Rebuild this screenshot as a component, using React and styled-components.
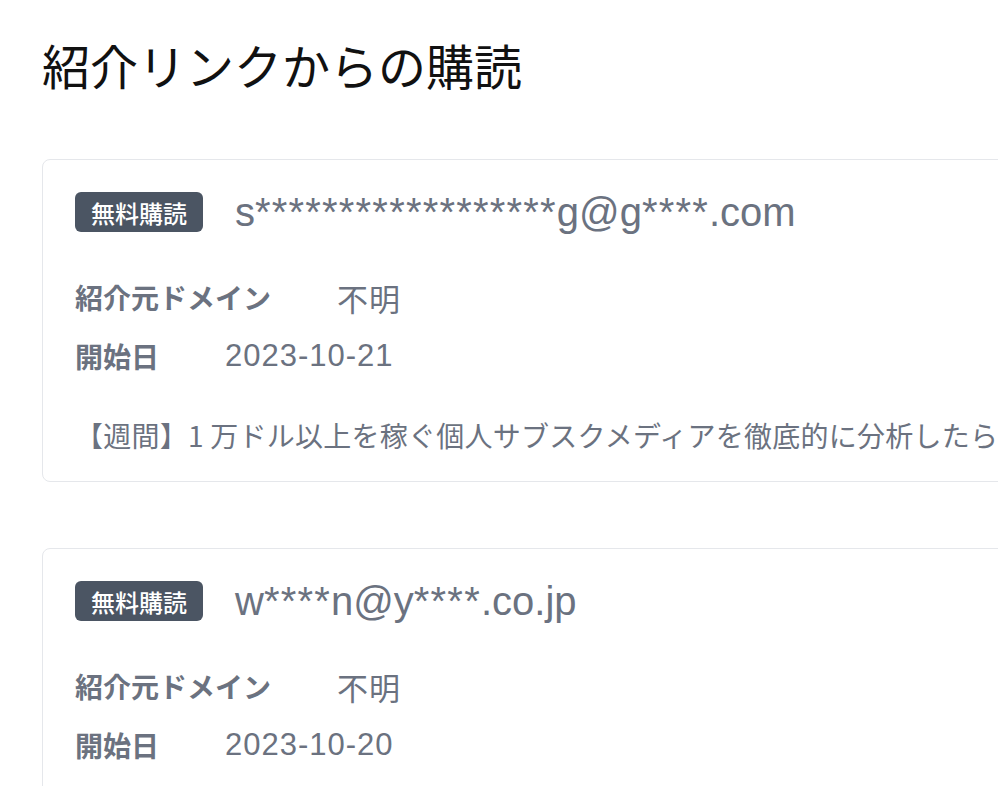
import React from 'react'
import styled, { createGlobalStyle } from 'styled-components'

const GlobalStyle = createGlobalStyle`
  html, body {
    margin: 0;
    padding: 0;
    background: #ffffff;
    overflow: hidden;
  }
  body {
    font-family: "Liberation Sans", "Noto Sans CJK JP", sans-serif;
  }
`;

const Page = styled.div`
  padding: 28px 0 0 42px;
  width: 1200px;
`;

const Title = styled.h1`
  margin: 0 0 59px;
  font-family: "Noto Sans CJK JP", sans-serif;
  font-size: 48px;
  font-weight: 400;
  line-height: 72px;
  color: #111111;
`;

const List = styled.div`
  display: flex;
  flex-direction: column;
  gap: 66px;
`;

const Card = styled.div`
  width: 1100px;
  border: 1px solid #e5e7eb;
  border-radius: 8px;
  padding: 32px 32px 26px;
  box-sizing: border-box;
`;

const Header = styled.div`
  display: flex;
  align-items: center;
  gap: 32px;
  height: 40px;
`;

const Badge = styled.span`
  display: inline-flex;
  align-items: center;
  height: 40px;
  padding: 0 16px;
  border-radius: 6px;
  background: #4b5563;
  color: #ffffff;
  font-family: "Noto Sans CJK JP", sans-serif;
  font-size: 24px;
  font-weight: 500;
`;

const Email = styled.span`
  font-size: 40px;
  color: #6b7280;
  line-height: 40px;
`;

const Mask = styled.span`
  letter-spacing: 1.2px;
`;

const Meta = styled.div`
  display: flex;
  flex-direction: column;
  gap: 19px;
  margin-top: 45px;
`;

const Row = styled.div`
  display: flex;
  align-items: center;
  gap: 66px;
  height: 40px;
`;

const Label = styled.span`
  font-family: "Noto Sans CJK JP", sans-serif;
  font-size: 28px;
  font-weight: 700;
  color: #6b7280;
`;

const Value = styled.span`
  font-size: 31px;
  letter-spacing: 1px;
  color: #6b7280;
`;

const Post = styled.div`
  margin-top: 39px;
  line-height: 40px;
  font-family: "Noto Sans CJK JP", sans-serif;
  font-size: 28px;
  letter-spacing: 0.25px;
  color: #6b7280;
  white-space: nowrap;
`;

// split the masked address so the asterisk runs can be spaced like the original
const MaskedEmail = ({ value }) => (
  <Email>
    {value.split(/(\*+)/).map((part, i) =>
      part.startsWith('*') ? <Mask key={i}>{part}</Mask> : part
    )}
  </Email>
);

const subs = [
  {
    email: 's******************g@g****.com',
    domain: '不明',
    date: '2023-10-21',
    post: '【週間】1 万ドル以上を稼ぐ個人サブスクメディアを徹底的に分析したら見えてきたこと',
  },
  {
    email: 'w****n@y****.co.jp',
    domain: '不明',
    date: '2023-10-20',
    post: '【週間】1 万ドル以上を稼ぐ個人サブスクメディアを徹底的に分析したら見えてきたこと',
  },
];

const App = () => (
  <>
    <GlobalStyle />
    <Page>
      <Title>紹介リンクからの購読</Title>
      <List>
        {subs.map((s, i) => (
          <Card key={i}>
            <Header>
              <Badge>無料購読</Badge>
              <MaskedEmail value={s.email} />
            </Header>
            <Meta>
              <Row>
                <Label>紹介元ドメイン</Label>
                <Value>{s.domain}</Value>
              </Row>
              <Row>
                <Label>開始日</Label>
                <Value>{s.date}</Value>
              </Row>
            </Meta>
            <Post>{s.post}</Post>
          </Card>
        ))}
      </List>
    </Page>
  </>
);

export default App
